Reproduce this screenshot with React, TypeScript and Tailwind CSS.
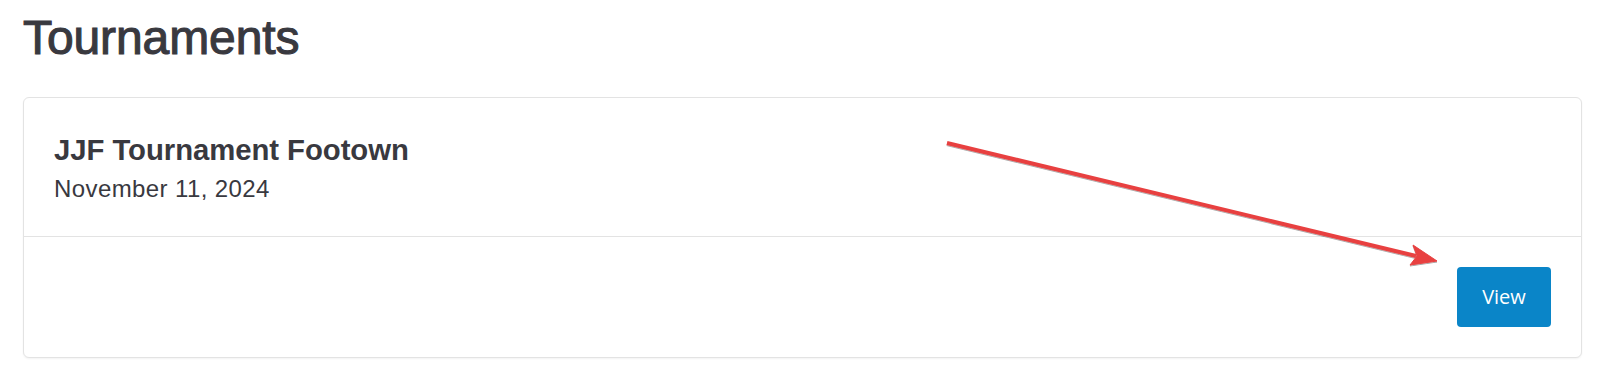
import React from "react";

const font = { fontFamily: "'Liberation Sans', Arial, sans-serif" };

export default function App() {
  return (
    <div className="relative w-full min-h-[379px] bg-white px-[23px] pt-[10px]" style={font}>
      <h1 className="text-[48px] leading-[56px] font-normal text-[#39393f] tracking-[-0.1px] [-webkit-text-stroke-width:1.1px]">
        Tournaments
      </h1>
      <div className="mt-[31px] rounded-[6px] border border-[#e3e3e3] bg-white shadow-[0_1px_2px_rgba(0,0,0,0.05)]">
        <div className="px-[30px] pt-[35px] pb-[32px] border-b border-[#e3e3e3]">
          <h2 className="text-[29.3px] leading-[34px] font-bold text-[#39393f] tracking-[-0.05px]">
            JJF Tournament Footown
          </h2>
          <p className="mt-[7px] text-[24px] leading-[30px] text-[#39393f] tracking-[0.4px]">
            November 11, 2024
          </p>
        </div>
        <div className="flex justify-end px-[30px] pt-[30px] pb-[30px]">
          <button
            className="w-[94px] h-[60px] rounded-[4px] bg-[#0a85c8] text-white text-[20px]"
            style={{ fontFamily: "'Open Sans', sans-serif" }}
          >
            View
          </button>
        </div>
      </div>
      <svg
        className="absolute left-0 top-0 pointer-events-none"
        width="1605"
        height="379"
        viewBox="0 0 1605 379"
      >
        <defs>
          <filter id="sh" x="-5%" y="-50%" width="110%" height="200%">
            <feDropShadow dx="0" dy="1" stdDeviation="0.6" floodColor="#000" floodOpacity="0.35" />
          </filter>
        </defs>
        <g filter="url(#sh)" fill="#e84141" stroke="#e84141">
          <line x1="947" y1="143" x2="1416" y2="256" strokeWidth="4" />
          <path d="M1437 261 L1413 245 L1417 256 L1410 265 Z" strokeWidth="1" strokeLinejoin="round" />
        </g>
      </svg>
    </div>
  );
}
